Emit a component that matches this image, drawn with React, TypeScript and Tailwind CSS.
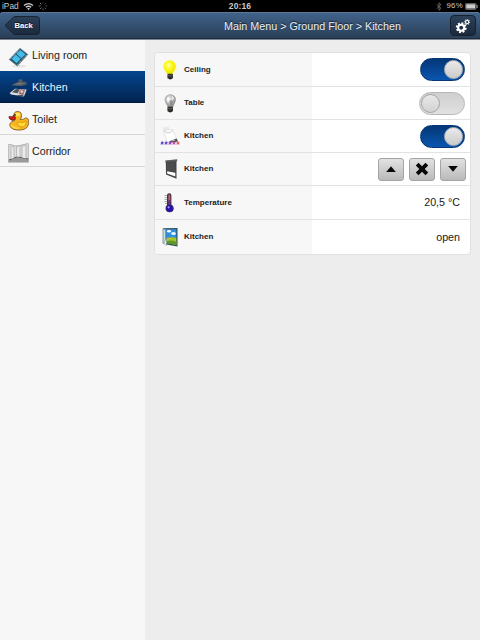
import type { ReactNode } from "react";

function BulbIcon({ on }: { on: boolean }) {
  const id = on ? "bulb-on" : "bulb-off";
  return (
    <svg width="20" height="22" viewBox="0 0 20 22">
      <defs>
        <radialGradient id={id} cx="0.42" cy="0.35" r="0.65">
          <stop offset="0" stopColor={on ? "#ffffb8" : "#f4f4f4"} />
          <stop offset="0.4" stopColor={on ? "#fffb20" : "#c4c4c4"} />
          <stop offset="1" stopColor={on ? "#e9e000" : "#7c7c7c"} />
        </radialGradient>
      </defs>
      {on && <circle cx="9.700" cy="8" r="7" fill="#ffff50" opacity="0.45" />}
      <path
        d={on
          ? "M9.700 1.600C6.100 1.600 3.700 4.200 3.700 7.400C3.700 10.600 6.500 12 7.100 15.200H12.500C12.800 12 15.700 10.600 15.700 7.400C15.700 4.200 13.300 1.600 9.700 1.600Z"
          : "M10.300 2.300C7 2.300 4.700 4.800 4.700 8C4.700 10.800 7.200 12.600 7.800 15.800H13C13.400 12.600 15.800 10.800 15.800 7.800C15.800 4.700 13.500 2.300 10.300 2.300Z"}
        fill={`url(#${id})`}
      />
      {!on && <path d="M6.500 7L8.500 4.500L9.500 8L8 11ZM12 3.500L14 6L12.800 9Z" fill="#fff" opacity="0.9" />}
      {!on && <path d="M9.500 8L10.500 14.500L13.500 9Z" fill="#777" opacity="0.6" />}
      <rect x="7.400" y="14.800" width="5.600" height="4.800" rx="1.200" fill="#33332f" />
      <path d="M8 16.600H12.500" stroke="#77776c" strokeWidth="0.6" />
      <ellipse cx="10.200" cy="19.600" rx="1.900" ry="0.800" fill="#222" />
    </svg>
  );
}

function SpotIcon() {
  const stars = ["#5540d8", "#6a3fd0", "#9140c8", "#c046a0", "#ec5068"];
  return (
    <svg width="20" height="22" viewBox="0 0 20 22">
      <path d="M2.500 2.500L9 1.500L9 5L3.500 5.500Z" fill="#e9e9e9" />
      <path d="M3.500 5.500L12.500 4.500L17 15Q13 18 7 16.500Z" fill="#fff" stroke="#d6d6d6" strokeWidth="0.6" />
      <path d="M3.800 6Q9 10 13 5" fill="none" stroke="#c6c6c6" strokeWidth="0.9" />
      <path d="M9.500 16.200L16.500 13.400L18 16.500L11 17.500Z" fill="#454545" />
      <path d="M11 15.800L15 14.200L15.500 15.500L12 16.500Z" fill="#b5b5b5" />
      {stars.map((color, i) => (
        <path
          key={color}
          transform={`translate(${2.100 + i * 3.950} 17.900) scale(1.080)`}
          d="M0-2.200L0.600-0.700L2.100-0.700L1 0.300L1.300 1.900L0 1L-1.300 1.900L-1-0.300L-2.100-0.700L-0.600-0.700Z"
          fill={color}
        />
      ))}
    </svg>
  );
}

function BlindIcon() {
  return (
    <svg width="20" height="22" viewBox="0 0 20 22">
      <path d="M5.800 3L16.500 1.700V20.700L6 16.400Z" fill="#444" />
      <path d="M7.100 13.200L15.300 14.800V18.600L7.100 15.500Z" fill="#fff" />
      <path d="M5.300 2.600L17.200 1.300V3.300L5.300 4.300Z" fill="#5c5c5c" />
      <path d="M6.600 5V12.600L15.300 14.200V4" fill="#4c4c4c" />
    </svg>
  );
}

function ThermometerIcon() {
  return (
    <svg width="20" height="22" viewBox="0 0 20 22">
      <path d="M4.500 3.500H8M4.500 5.500H8M4.500 7.500H8M4.500 9.500H8M5 11.500H8" stroke="#999" strokeWidth="0.8" />
      <path d="M7 3.300Q7 1.200 9.200 1.200Q11.400 1.200 11.400 3.300V12.500Q13.800 14 13.800 16.300Q13.600 20.300 9.600 20.300Q5.600 20 5.500 16.300Q5.500 14 7 13Z" fill="#4a2f40" />
      <path d="M8.400 3.500Q9.300 1.700 10.200 3.500V10H8.400Z" fill="#bd6577" />
      <path d="M8.400 8H10.200V15H8.400Z" fill="#6332a0" />
      <circle cx="9.600" cy="16.400" r="3.400" fill="#2212b0" />
      <circle cx="8.600" cy="15.300" r="1.100" fill="#a39aff" />
    </svg>
  );
}

function WindowIcon() {
  return (
    <svg width="20" height="22" viewBox="0 0 20 22">
      <path d="M3.200 2.300L17.500 2V20.500L6.500 18.500L3.200 17Z" fill="#304e57" />
      <path d="M5.600 3.200H16.400V12H5.600Z" fill="#2f90df" />
      <path d="M6.300 12Q12 10.400 16.400 12V19L6.300 17Z" fill="#a9c52c" />
      <path d="M6.300 15.500Q12 13.500 16.400 16V19L6.300 17Z" fill="#5d982b" />
      <ellipse cx="9" cy="5.300" rx="2.200" ry="1.200" fill="#fff" />
      <ellipse cx="13.500" cy="7.600" rx="2.400" ry="1.500" fill="#edf7ff" />
      <path d="M3 2.600L5.800 3.600V17L3 17.500Z" fill="#c6dfe0" stroke="#526466" strokeWidth="0.600" />
      <path d="M3.800 17.500L6.500 11.500V19.500Z" fill="#f5f5f5" stroke="#687" strokeWidth="0.500" />
    </svg>
  );
}

function FilmIcon() {
  return (
    <svg width="22" height="22" viewBox="0 0 22 22">
      <ellipse cx="11" cy="19.200" rx="7" ry="1.300" fill="#e2e2e2" />
      <path d="M1.200 12.500L12 1.200L19.800 7.500L9.300 19Z" fill="#2f5564" stroke="#5b7680" strokeWidth="0.600" />
      <path d="M3.700 11.800L7.700 7.500L12.700 11.800L8.600 16.300ZM8.400 6.800L12.200 2.900L17.400 7.200L13.400 11.200Z" fill="#40bdec" />
      <path d="M2.300 11.900L11.700 2.200M9.400 17.700L18.900 7.400" stroke="#c6e2e8" strokeWidth="0.800" strokeDasharray="1 1" />
    </svg>
  );
}

function StoveIcon() {
  return (
    <svg width="22" height="22" viewBox="0 0 22 22">
      <path d="M4.300 6.500L8.800 4.400L10.500 4V1.500L14.300 1.300V3.500L18.500 4L18.700 6.500L13.500 8L4.300 7.500Z" fill="#565b62" />
      <path d="M6 6.400L10 4.800L16.500 5L12.500 6.700Z" fill="#70747b" />
      <path d="M1.700 15L7 10.700L18.700 11.500L16 18.500L3 16.500Z" fill="#d8dadd" />
      <path d="M4 14.300L8 11L12 11.300L9.500 15.200Z" fill="#50545b" />
      <path d="M10.500 16L12.500 11.500L17.300 11.800L15.200 17Z" fill="#96787a" />
      <circle cx="13.800" cy="13.600" r="1.700" fill="#f0d7d4" stroke="#a54848" strokeWidth="0.600" />
      <path d="M9 17.300L15.500 16.800L15 19L9.500 18Z" fill="#4d535c" />
    </svg>
  );
}

function DuckIcon() {
  return (
    <svg width="22" height="22" viewBox="0 0 22 22">
      <path d="M5.600 6.200Q5.700 1.500 9.600 1.500Q14 1.700 13.500 6.200Q13.400 8.300 12 9.400Q15.500 10 17.500 8Q20.800 7.500 20.600 12.500Q20.300 19.500 12.800 20Q4 20.600 2 16.200Q1 12.500 5.500 11Q7 10.500 6.800 9.500Z" fill="#f7b51c" stroke="#765022" strokeWidth="0.8" />
      <ellipse cx="9.600" cy="4.400" rx="2.600" ry="1.900" fill="#ffe45d" />
      <path d="M6 5.500Q3 7.500 1 6.400Q0.600 9.600 5 10.400Q8 10 7.500 7.500Z" fill="#c51d15" stroke="#662015" strokeWidth="0.7" />
      <path d="M11 12Q14 14 18 11Q18.500 16 14 17Q10 16.600 9 13Z" fill="#ffda39" stroke="#d78a13" strokeWidth="0.7" />
      <ellipse cx="7" cy="5" rx="0.8" ry="1.100" fill="#242424" />
      <path d="M3 15Q6 18.500 11 18.300" stroke="#ffd84b" strokeWidth="1.500" fill="none" />
    </svg>
  );
}

function CorridorIcon() {
  return (
    <svg width="22" height="22" viewBox="0 0 22 22">
      <path d="M0.500 2L9 4L20.500 1.200V20.500H0.500Z" fill="#dedede" />
      <path d="M0.500 20.500V18L9.500 14.500L20.500 17V20.500Z" fill="#9a9a9a" />
      <path d="M1 18L9.500 14.600L20.500 17.100" fill="none" stroke="#555" strokeWidth="1" />
      <path d="M3 17V4.200L6 4.700V16M8.500 14.500V4L12 3.700V15M14 15.500V4L18 3.300V16.500" fill="#eaeaea" stroke="#ababab" strokeWidth="0.700" />
      <path d="M0.700 2V20.500M20.300 1.500V20.500M1 2.200L9 4.200L20 1.500" fill="none" stroke="#aaa" strokeWidth="0.800" />
    </svg>
  );
}

function Gear({ teeth }: { teeth: number }) {
  return (
    <>
      {Array.from({ length: teeth }, (_, i) => (
        <path key={i} d="M-1.100-5.400H1.100L0.900-3H-0.900Z" transform={`rotate(${(i * 360) / teeth + 15})`} fill="#fff" />
      ))}
      <circle r="3" fill="none" stroke="#fff" strokeWidth="2.100" />
    </>
  );
}

function GearsIcon() {
  return (
    <svg width="16" height="16" viewBox="0 0 16 16">
      <g transform="translate(6.200 9.700)"><Gear teeth={8} /></g>
      <g transform="translate(12.100 4) scale(.52)"><Gear teeth={8} /></g>
    </svg>
  );
}

function StatusBar() {
  return (
    <div className="grid h-[12px] shrink-0 grid-cols-3 items-center bg-black px-[2px] text-[8px] leading-[12px] text-[#c8c8c8]">
      <div className="flex items-center">
        <span className="w-[21px] text-[8.3px] font-medium">iPad</span>
        <svg width="11" height="9" viewBox="0 0 11 9" fill="none" stroke="#ccc" strokeWidth="1.300">
          <path d="M1 3.500Q5.500-0.200 10 3.500M2.800 5.300Q5.500 3.200 8.200 5.300" />
          <path d="M4 6.600Q5.500 5.500 7 6.600L5.500 8.300Z" fill="#ccc" stroke="none" />
        </svg>
        <svg className="ml-[4px]" width="10" height="10" viewBox="-5 -5 10 10">
          {Array.from({ length: 8 }, (_, i) => (
            <path key={i} d="M0-4.300V-2.300" stroke="#aaa" strokeWidth="0.9" opacity={0.3 + i * 0.08} transform={`rotate(${i * 45})`} />
          ))}
        </svg>
      </div>
      <div className="text-center text-[8.500px] font-bold tracking-[0.1px]">20:16</div>
      <div className="flex items-center justify-end">
        <svg width="6" height="9" viewBox="0 0 6 9" fill="none" stroke="#777" strokeWidth="0.8">
          <path d="M0.700 2.400L5 6.300L3 8.200V0.800L5 2.700L0.700 6.600" />
        </svg>
        <span className="mr-[2px] ml-[4px] text-[7.800px] tracking-[0.300px]">96%</span>
        <svg width="13" height="7" viewBox="0 0 13 7">
          <rect x="0.400" y="0.400" width="10.700" height="6" rx="0.800" fill="none" stroke="#888" strokeWidth="0.8" />
          <rect x="1.200" y="1.200" width="9.100" height="4.400" fill="#ccc" />
          <path d="M11.600 2H12.600V5H11.600Z" fill="#aaa" />
        </svg>
      </div>
    </div>
  );
}

function Header() {
  return (
    <header className="flex h-[28px] shrink-0 items-center rounded-t-[3px] border-b border-[#7c8793] bg-linear-to-b from-[#41648c] to-[#293d55] pr-[4px] pl-[5px] shadow-[inset_0_1px_0_#607792,inset_0_-1px_0_#1f2c3d]">
      <div className="relative h-[19px] w-[35px] shrink-0">
        <svg className="absolute inset-0" width="35" height="19" viewBox="0 0 35 19">
          <defs>
            <linearGradient id="back-fill" x1="0" y1="0" x2="0" y2="1">
              <stop offset="0" stopColor="#2b4059" />
              <stop offset="1" stopColor="#1b2a3d" />
            </linearGradient>
          </defs>
          <path d="M8.500 1Q9.200 0.500 10 0.500H31.500Q34.500 0.500 34.500 3.500V15.500Q34.500 18.500 31.500 18.500H10Q9.200 18.500 8.500 18L1 10.500Q0.200 9.500 1 8.500Z" fill="url(#back-fill)" stroke="#16202f" strokeWidth="0.900" />
        </svg>
        <span className="relative block pl-[9.500px] text-[7.700px] leading-[19px] font-bold text-white [text-shadow:0_-1px_0_#0a111b]">Back</span>
      </div>
      <h1 className="ml-[184px] text-[10.750px] leading-[20px] whitespace-nowrap text-[#e9eff7] [text-shadow:0_-1px_1px_#111c2b]">
        Main Menu &gt; Ground Floor &gt; Kitchen
      </h1>
      <div className="ml-auto flex h-[21px] w-[26px] shrink-0 items-center justify-center rounded-[4px] border border-[#16202f] bg-linear-to-b from-[#2c415a] to-[#1b293c]">
        <GearsIcon />
      </div>
    </header>
  );
}

function RoomItem({ icon, name, active = false }: { icon: ReactNode; name: string; active?: boolean }) {
  return (
    <li className={active
      ? "flex h-[32px] items-start border-b border-[#011c42] bg-linear-to-b from-[#04468f] to-[#03244f] pl-[8px] text-[#edf3fb]"
      : "flex h-[32px] items-start border-b border-[#d6d6d6] pl-[8px] text-[#222]"}>
      <span className="mt-[7px] w-[24px]">{icon}</span>
      <span className="mt-[8px] text-[10.700px] leading-[16px]">{name}</span>
    </li>
  );
}

function Toggle({ on }: { on: boolean }) {
  return (
    <div className={on
      ? "flex h-[23px] w-[45px] items-center justify-end rounded-full border border-[#063674] bg-linear-to-b from-[#043777] to-[#0b56b0] pr-[1px]"
      : "flex h-[23px] w-[46px] items-center rounded-full border border-[#b8b8b8] bg-linear-to-b from-[#cfcfcf] to-[#e1e1e1] pl-[1px]"}>
      <div className={on
        ? "size-[19px] rounded-full border border-[#b5b5b5] bg-linear-to-b from-[#eaeaea] to-[#cbcbcb]"
        : "size-[19px] rounded-full border border-[#a5a5a5] bg-linear-to-b from-[#e8e8e8] to-[#d2d2d2]"} />
    </div>
  );
}

function BlindButton({ path }: { path: string }) {
  return (
    <div className="flex h-[23px] w-[26px] items-center justify-center rounded-[3px] border border-[#a4a4a4] bg-linear-to-b from-[#e2e2e2] to-[#bababa]">
      <svg width="14" height="14" viewBox="0 0 14 14"><path d={path} fill="#080808" /></svg>
    </div>
  );
}

function DeviceRow({ icon, name, height, children }: { icon: ReactNode; name: string; height: string; children: ReactNode }) {
  return (
    <div className={`${height} flex border-b border-[#e2e2e2] last:border-b-0`}>
      <div className="flex w-[157px] items-center bg-[#f7f7f7] pl-[5px]">
        <span className="w-[24px]">{icon}</span>
        <span className="text-[8px] leading-[12px] font-bold text-[#222]">{name}</span>
      </div>
      <div className="flex flex-1 items-center justify-end pr-[5px] text-[10.700px] text-[#181818]">{children}</div>
    </div>
  );
}

export default function App() {
  return (
    <div className="flex h-[640px] w-[480px] flex-col overflow-hidden bg-black font-['Liberation_Sans',Arial,sans-serif]">
      <StatusBar />
      <Header />
      <div className="flex min-h-0 flex-1 bg-[#ededed]">
        <ul className="w-[145px] bg-[#f7f7f7]">
          <li className="flex h-[31px] items-start pl-[8px] text-[#222]">
            <span className="mt-[7px] w-[24px]"><FilmIcon /></span>
            <span className="mt-[7px] text-[10.700px] leading-[16px]">Living room</span>
          </li>
          <RoomItem icon={<StoveIcon />} name="Kitchen" active />
          <RoomItem icon={<DuckIcon />} name="Toilet" />
          <RoomItem icon={<CorridorIcon />} name="Corridor" />
        </ul>
        <main className="flex-1 pt-[12px] pl-[9px]">
          <section className="w-[317px] overflow-hidden rounded-[4px] border border-[#e0e0e0] bg-white">
            <DeviceRow icon={<BulbIcon on />} name="Ceiling" height="h-[34px]"><Toggle on /></DeviceRow>
            <DeviceRow icon={<BulbIcon on={false} />} name="Table" height="h-[33px]"><Toggle on={false} /></DeviceRow>
            <DeviceRow icon={<SpotIcon />} name="Kitchen" height="h-[33px]"><Toggle on /></DeviceRow>
            <DeviceRow icon={<BlindIcon />} name="Kitchen" height="h-[33px]">
              <div className="-mr-px flex gap-[5px]">
                <BlindButton path="M2.200 10L7 4.300L11.800 10Z" />
                <BlindButton path="M3.500 0.800L7 4.200L10.500 0.800L13.200 3.500L9.700 7L13.200 10.500L10.500 13.200L7 9.800L3.500 13.200L0.800 10.500L4.300 7L0.800 3.500Z" />
                <BlindButton path="M2.200 4L11.800 4L7 9.700Z" />
              </div>
            </DeviceRow>
            <DeviceRow icon={<ThermometerIcon />} name="Temperature" height="h-[34px]"><span className="pr-[5px]">20,5 °C</span></DeviceRow>
            <DeviceRow icon={<WindowIcon />} name="Kitchen" height="h-[34px]"><span className="pr-[5px]">open</span></DeviceRow>
          </section>
        </main>
      </div>
    </div>
  );
}
